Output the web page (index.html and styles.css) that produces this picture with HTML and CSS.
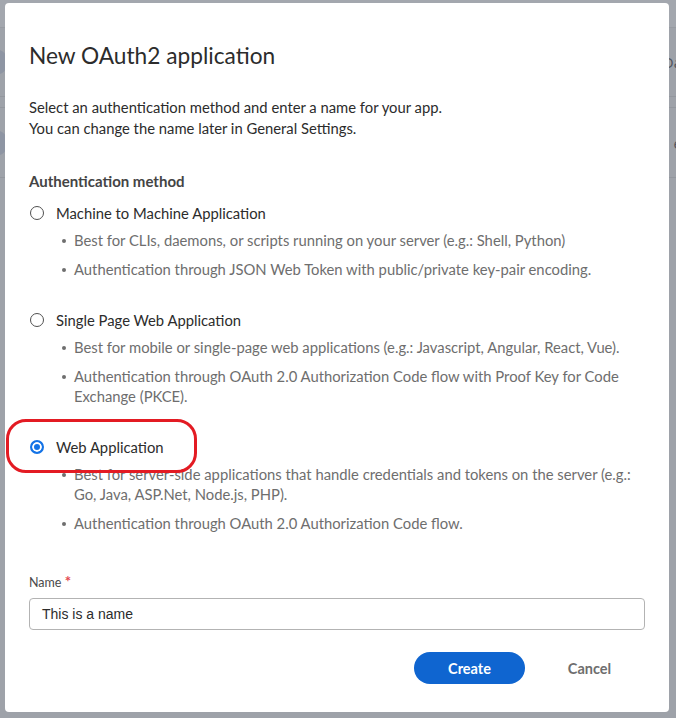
FILE: index.html
```html
<!DOCTYPE html>
<html>
<head>
<meta charset="utf-8">
<link rel="stylesheet" href="styles.css">
</head>
<body>
<div class="backdrop">
  <div class="bd-top"></div>
  <div class="bd-row bd-row-a"><span class="bd-avatar"></span><span class="bd-text">Da</span></div>
  <div class="bd-gap"></div>
  <div class="bd-row bd-row-b"><span class="bd-avatar"></span><span class="bd-text">e</span></div>
</div>

<div class="modal">
  <h1 class="title">New OAuth2 application</h1>
  <p class="intro">Select an authentication method and enter a name for your app.<br>You can change the name later in General Settings.</p>
  <h2 class="section">Authentication method</h2>

  <div class="option">
    <div class="radio-row"><span class="radio"></span><span class="radio-label">Machine to Machine Application</span></div>
    <ul class="bullets">
      <li>Best for CLIs, daemons, or scripts running on your server (e.g.: Shell, Python)</li>
      <li>Authentication through JSON Web Token with public/private key-pair encoding.</li>
    </ul>
  </div>

  <div class="option">
    <div class="radio-row"><span class="radio"></span><span class="radio-label">Single Page Web Application</span></div>
    <ul class="bullets">
      <li>Best for mobile or single-page web applications (e.g.: Javascript, Angular, React, Vue).</li>
      <li>Authentication through OAuth 2.0 Authorization Code flow with Proof Key for Code Exchange (PKCE).</li>
    </ul>
  </div>

  <div class="option">
    <div class="radio-row"><span class="radio checked"></span><span class="radio-label">Web Application</span></div>
    <ul class="bullets">
      <li>Best for server-side applications that handle credentials and tokens on the server (e.g.: Go, Java, ASP.Net, Node.js, PHP).</li>
      <li>Authentication through OAuth 2.0 Authorization Code flow.</li>
    </ul>
  </div>

  <div class="field">
    <label class="field-label">Name <span class="req">*</span></label>
    <div class="input">This is a name</div>
  </div>

  <div class="footer">
    <button class="btn-primary">Create</button>
    <button class="btn-secondary">Cancel</button>
  </div>

  <div class="highlight"></div>
</div>
</body>
</html>
```

FILE: styles.css
```css
* { box-sizing: border-box; }
html, body { margin: 0; padding: 0; }
body {
  width: 676px;
  height: 718px;
  overflow: hidden;
  background: #9ea2a9;
  font-family: Lato, "Open Sans", sans-serif;
  position: relative;
}

/* backdrop page behind the dialog */
.backdrop { width: 676px; }
.bd-top { height: 28px; background: #a3a7ae; border-bottom: 1px solid #979ba2; }
.bd-row {
  height: 69px;
  display: flex;
  align-items: center;
  justify-content: space-between;
  border-bottom: 1px solid #93979e;
}
.bd-row-b { border-top: 1px solid #93979e; height: 71px; }
.bd-gap { height: 10px; }
.bd-avatar {
  width: 26px; height: 26px; border-radius: 50%;
  background: #8e95a3;
  margin-left: -18px;
}
.bd-text {
  font-family: "Open Sans", sans-serif;
  font-size: 15px;
  color: #50545c;
  margin-right: -6px;
}

/* dialog */
.modal {
  position: absolute;
  left: 5px;
  top: 3px;
  width: 664px;
  height: 709px;
  background: #fff;
  border-radius: 4px;
  padding: 39px 24px 0 24px;
}
.title {
  margin: 0;
  font-size: 22.7px;
  line-height: 28px;
  font-weight: 400;
  color: #2c2c2c;
}
.intro {
  margin: 27px 0 0 0;
  font-size: 14.8px;
  line-height: 21px;
  color: #2c2c2c;
}
.section {
  margin: 32px 0 0 0;
  font-size: 15px;
  line-height: 20px;
  font-weight: 700;
  color: #444;
}
.option { margin-top: 11px; }
.option + .option { margin-top: 30px; }
.radio-row {
  display: flex;
  align-items: center;
  height: 22px;
  padding-left: 1px;
}
.radio {
  width: 14px; height: 14px;
  border: 1.5px solid #505050;
  border-radius: 50%;
  flex: none;
}
.radio.checked {
  border: 2px solid #1473e6;
  background: #1473e6;
  box-shadow: inset 0 0 0 2px #fff;
}
.radio-label {
  margin-left: 12px;
  font-size: 14.8px;
  color: #2c2c2c;
}
.bullets {
  list-style: none;
  margin: 6px 0 0 0;
  padding: 0 0 0 45px;
}
.bullets li {
  position: relative;
  font-size: 14.8px;
  line-height: 20px;
  color: #6e6e6e;
  padding-right: 10px;
}
.bullets li + li { margin-top: 9px; }
.bullets li::before {
  content: "";
  position: absolute;
  left: -12px;
  top: 9px;
  width: 4px; height: 4px;
  border-radius: 50%;
  background: #6e6e6e;
}

.field { margin-top: 42px; }
.field-label {
  display: block;
  font-size: 12.5px;
  line-height: 16px;
  color: #4b4b4b;
}
.req { color: #e34850; font-size: 15px; font-weight: 700; line-height: 10px; }
.input {
  margin-top: 7px;
  height: 32px;
  border: 1px solid #b3b3b3;
  border-radius: 4px;
  padding: 0 12px;
  display: flex;
  align-items: center;
  font-family: "Liberation Sans", Arial, sans-serif;
  font-size: 14px;
  color: #2c2c2c;
}

.footer {
  margin-top: 22px;
  display: flex;
  justify-content: flex-end;
  gap: 21px;
  padding-right: 12px;
}
.btn-primary {
  width: 111px;
  height: 32px;
  border: none;
  border-radius: 16px;
  background: #0f65d0;
  color: #fff;
  font-family: Lato, sans-serif;
  font-size: 14.5px;
  font-weight: 700;
}
.btn-secondary {
  width: 87px;
  height: 32px;
  border: none;
  background: transparent;
  color: #6e6e6e;
  font-family: Lato, sans-serif;
  font-size: 14.5px;
  font-weight: 700;
}

.highlight {
  position: absolute;
  left: 1px;
  top: 416px;
  width: 191px;
  height: 54px;
  border: 3.5px solid #e31b23;
  border-radius: 20px;
  pointer-events: none;
}
```
